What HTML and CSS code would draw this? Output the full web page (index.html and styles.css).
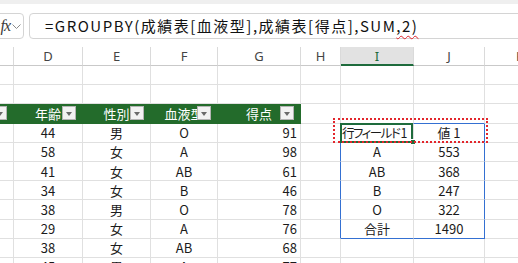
FILE: index.html
```html
<!DOCTYPE html>
<html>
<head>
    <meta charset="utf-8" />
    <title>GROUPBY</title>
    <link rel="stylesheet" href="styles.css">
</head>
<body>
    <div class="formula-bar">
        <div class="fx-box">
            <span class="fx">fx</span>
            <svg class="chevron" width="9" height="6" viewBox="0 0 9 6"><polyline points="0.5,0.5 4.5,4.5 8.5,0.5" fill="none" stroke="#8a8a8a" stroke-width="1"/></svg>
        </div>
        <div class="formula">=GROUPBY(成績表[血液型],成績表[得点],SUM<span class="squiggle">,2)</span></div>
    </div>

    <div class="sheet">
        <!-- 列見出し -->
        <div class="ch"></div>
        <div class="ch">D</div>
        <div class="ch">E</div>
        <div class="ch">F</div>
        <div class="ch">G</div>
        <div class="ch">H</div>
        <div class="ch sel">I</div>
        <div class="ch">J</div>
        <div class="ch">K</div>

        <div class="c"></div><div class="c"></div><div class="c"></div><div class="c"></div><div class="c"></div><div class="c"></div><div class="c"></div><div class="c"></div><div class="c"></div>
        <div class="c"></div><div class="c"></div><div class="c"></div><div class="c"></div><div class="c"></div><div class="c"></div><div class="c"></div><div class="c"></div><div class="c"></div>

        <!-- テーブル見出し -->
        <div class="c th"><span class="dd"></span></div>
        <div class="c th">年齢<span class="dd"></span></div>
        <div class="c th">性別<span class="dd"></span></div>
        <div class="c th">血液型<span class="dd"></span></div>
        <div class="c th">得点<span class="dd"></span></div>
        <div class="c"></div>
        <div class="c spill-top"></div>
        <div class="c spill-top"></div>
        <div class="c"></div>

        <div class="c"></div><div class="c">44</div><div class="c">男</div><div class="c">O</div><div class="c r">91</div><div class="c spill-left"></div>
        <div class="c l active"><span class="field">行フィールド 1</span><span class="handle"></span><span class="dotted"></span></div>
        <div class="c spill-right">値 1</div><div class="c"></div>

        <div class="c"></div><div class="c">58</div><div class="c">女</div><div class="c">A</div><div class="c r">98</div><div class="c spill-left"></div>
        <div class="c">A</div><div class="c spill-right">553</div><div class="c"></div>

        <div class="c"></div><div class="c">41</div><div class="c">女</div><div class="c">AB</div><div class="c r">61</div><div class="c spill-left"></div>
        <div class="c">AB</div><div class="c spill-right">368</div><div class="c"></div>

        <div class="c"></div><div class="c">34</div><div class="c">女</div><div class="c">B</div><div class="c r">46</div><div class="c spill-left"></div>
        <div class="c">B</div><div class="c spill-right">247</div><div class="c"></div>

        <div class="c"></div><div class="c">38</div><div class="c">男</div><div class="c">O</div><div class="c r">78</div><div class="c spill-left"></div>
        <div class="c">O</div><div class="c spill-right">322</div><div class="c"></div>

        <div class="c"></div><div class="c">29</div><div class="c">女</div><div class="c">A</div><div class="c r">76</div><div class="c spill-left"></div>
        <div class="c spill-bottom">合計</div><div class="c spill-right spill-bottom">1490</div><div class="c"></div>

        <div class="c"></div><div class="c">38</div><div class="c">女</div><div class="c">AB</div><div class="c r">68</div><div class="c"></div>
        <div class="c"></div><div class="c"></div><div class="c"></div>

        <div class="c"></div><div class="c">45</div><div class="c">男</div><div class="c">A</div><div class="c r">77</div><div class="c"></div>
        <div class="c"></div><div class="c"></div><div class="c"></div>
    </div>
</body>
</html>
```

FILE: styles.css
```css
body {
    margin: 0;
    width: 518px;
    height: 263px;
    overflow: hidden;
    background: #fff;
    font-family: "Noto Sans CJK JP", "Noto Sans", sans-serif;
    color: #1b1b1b;
}

/* 数式バー */
.formula-bar {
    height: 47px;
    box-sizing: border-box;
    border-top: 4px solid #efefef;
    padding-top: 9px;
    display: flex;
    align-items: flex-start;
    gap: 5px;
}
.fx-box {
    margin-left: -17px;
    width: 41px;
    height: 26px;
    box-sizing: border-box;
    border: 1px solid #d4d4d4;
    border-radius: 4px;
    display: flex;
    align-items: center;
    justify-content: flex-end;
    padding-right: 2px;
    gap: 2px;
}
.fx {
    font-family: "Liberation Serif", serif;
    font-style: italic;
    font-size: 16px;
    color: #3c3c3c;
    letter-spacing: -1px;
}
.chevron {
    margin-top: 2px;
}
.formula {
    flex: 1;
    margin-right: -10px;
    height: 26px;
    box-sizing: border-box;
    border: 1px solid #d4d4d4;
    border-radius: 4px;
    padding-left: 15px;
    font-size: 15px;
    line-height: 24px;
    letter-spacing: 1.5px;
    white-space: nowrap;
    color: #111;
}
.squiggle {
    text-decoration: underline wavy #e0242b;
    text-decoration-thickness: 1px;
    text-underline-offset: 3px;
}

/* シート */
.sheet {
    margin-left: -55px;
    display: grid;
    grid-template-columns: 69px 69px 68px 67px 83px 40px 73px 71px 71px;
    grid-template-rows: 19px;
    grid-auto-rows: 19.2px;
}
.ch {
    box-sizing: border-box;
    border-right: 1px solid #dadada;
    border-bottom: 1px solid #c9c9c9;
    display: flex;
    align-items: center;
    justify-content: center;
    font-family: "Noto Sans", sans-serif;
    font-size: 13px;
    color: #444;
}
.ch.sel {
    background: #e2e2e2;
    border-bottom: 2px solid #1e6b3c;
    color: #1e6b3c;
}
.c {
    box-sizing: border-box;
    border-right: 1px solid #e0e0e0;
    border-bottom: 1px solid #e0e0e0;
    display: flex;
    align-items: center;
    justify-content: center;
    font-size: 13px;
    white-space: nowrap;
    font-feature-settings: "palt";
}
.c.r {
    justify-content: flex-end;
    padding-right: 3px;
}
.c.l {
    justify-content: flex-start;
    padding-left: 1px;
}
.field {
    font-size: 12.5px;
    letter-spacing: -1.5px;
}
.c.th {
    position: relative;
    background: #236b2b;
    border-color: #236b2b;
    color: #fff;
}
.dd {
    position: absolute;
    right: 6px;
    top: 2px;
    width: 14px;
    height: 14px;
    box-sizing: border-box;
    background: #f2f2f2;
    border: 1px solid #b4b4b4;
}
.dd::after {
    content: "";
    position: absolute;
    left: 3px;
    top: 5px;
    border-left: 3.5px solid transparent;
    border-right: 3.5px solid transparent;
    border-top: 4px solid #6a6a6a;
}

/* スピル範囲 */
.spill-top {
    border-bottom-color: #3470d2;
}
.spill-left {
    border-right-color: #3470d2;
}
.spill-right {
    border-right-color: #3470d2;
}
.spill-bottom {
    border-bottom-color: #3470d2;
}

/* アクティブセル */
.active {
    position: relative;
}
.active::before {
    content: "";
    position: absolute;
    left: -1px;
    top: -1px;
    right: 0;
    bottom: -1px;
    border: 2px solid #1e6b3c;
}
.handle {
    position: absolute;
    right: -3px;
    bottom: -3px;
    width: 4px;
    height: 4px;
    background: #1e6b3c;
    border: 1px solid #fff;
    z-index: 2;
}
.dotted {
    position: absolute;
    left: -8px;
    top: -6px;
    width: 155px;
    height: 25px;
    box-sizing: border-box;
    border: 2px dotted #e3262c;
    z-index: 3;
}
```
